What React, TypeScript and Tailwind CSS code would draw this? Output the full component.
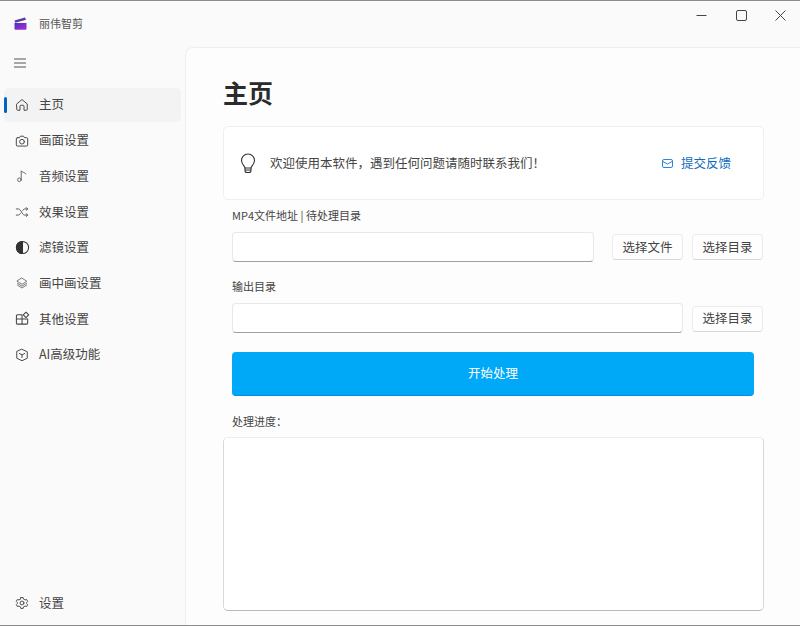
import { ReactNode } from "react";

const font = { fontFamily: '"Noto Sans CJK SC", "Noto Sans", sans-serif' };

function Ico({ children, size = 14, className = "text-[#444]" }: { children: ReactNode; size?: number; className?: string }) {
  return (
    <svg width={size} height={size} viewBox="0 0 16 16" fill="none" stroke="currentColor" strokeWidth={1.1} strokeLinecap="round" strokeLinejoin="round" className={className}>
      {children}
    </svg>
  );
}

const HomeIcon = () => (
  <Ico>
    <path d="M2 6.800 8 1.800l6 5V13a1 1 0 0 1-1 1H10.300V9.500a1.200 1.200 0 0 0-1.200-1.200H6.900a1.200 1.200 0 0 0-1.200 1.200V14H3a1 1 0 0 1-1-1z" />
  </Ico>
);
const CameraIcon = () => (
  <Ico>
    <path d="M2.800 4.200h2.400l1-1.700h3.600l1 1.700h2.400a1.300 1.300 0 0 1 1.300 1.300v7a1.300 1.300 0 0 1-1.300 1.300H2.800a1.300 1.300 0 0 1-1.300-1.300v-7a1.300 1.300 0 0 1 1.300-1.300z" />
    <circle cx="8" cy="8.800" r="2.700" />
  </Ico>
);
const MusicIcon = () => (
  <Ico className="text-[#666]">
    <circle cx="5" cy="12.300" r="2.100" />
    <path d="M7.100 12.300V2c.6 1.900 3.900 1.500 5.400 3.700" />
  </Ico>
);
const ShuffleIcon = () => (
  <Ico className="text-[#555]">
    <path d="M1.500 4.500h2.300c2.800 0 4.600 7 7 7h3.700M1.500 11.500h2.300c1 0 1.900-1 2.500-2M9 6.200c.5-1 1-1.700 1.800-1.700h3.700M12.900 2.900l1.600 1.600-1.600 1.600M12.900 9.900l1.600 1.600-1.600 1.600" />
  </Ico>
);
const ContrastIcon = () => (
  <Ico size={15} className="text-[#333]">
    <circle cx="8" cy="8" r="6.500" />
    <path d="M8 1.500a6.500 6.500 0 0 0 0 13z" fill="currentColor" />
  </Ico>
);
const LayersIcon = () => (
  <Ico className="text-[#777]">
    <path d="M8 2.500 13.500 6 8 9.500 2.500 6z" />
    <path d="M2.700 8.300 8 11.600l5.300-3.300M2.700 10.300 8 13.700l5.300-3.400" />
  </Ico>
);
const AppsIcon = () => (
  <Ico size={15}>
    <path d="M1.500 5a1 1 0 0 1 1-1h5v4.500h-6.000zM1.500 8.500h6V14h-5a1 1 0 0 1-1-1zM7.500 8.500h6V13a1 1 0 0 1-1 1h-5z" />
    <path d="m11.700 1.300 2.900 2.900-2.900 2.900-2.900-2.900z" />
  </Ico>
);
const CubeIcon = () => (
  <Ico>
    <path d="M8 1.500 14 4.300v7.400L8 14.500 2 11.700V4.300z" />
    <path d="M5 6.200 8 7.900l3-1.700M8 7.900v3" />
  </Ico>
);
const GearIcon = () => (
  <Ico>
    <path d="m6.700 1.800 2.600 0 .5 1.800 1.700.9 1.800-.5 1.200 2.200-1.300 1.300v1l1.300 1.300-1.200 2.200-1.800-.5-1.700.9-.5 1.800H6.700l-.5-1.800-1.700-.9-1.800.5-1.200-2.200L2.800 8.500v-1L1.500 6.200l1.200-2.200 1.800.5 1.700-.9z" />
    <circle cx="8" cy="8" r="2.200" />
  </Ico>
);

const navItems = [
  { label: "主页", icon: <HomeIcon />, active: true },
  { label: "画面设置", icon: <CameraIcon /> },
  { label: "音频设置", icon: <MusicIcon /> },
  { label: "效果设置", icon: <ShuffleIcon /> },
  { label: "滤镜设置", icon: <ContrastIcon /> },
  { label: "画中画设置", icon: <LayersIcon /> },
  { label: "其他设置", icon: <AppsIcon /> },
  { label: "AI高级功能", icon: <CubeIcon /> },
];

function NavRow({ label, icon, active }: { label: string; icon: ReactNode; active?: boolean }) {
  return (
    <div className={`relative h-[33.7px] mx-1 mt-0.5 flex items-center rounded-[5px] ${active ? "bg-[#f3f3f3]" : ""}`}>
      {active && <div className="absolute left-0 top-[9px] h-4 w-[3px] rounded-full bg-[#0067c0]" />}
      <div className="w-[35px] flex justify-center pl-[1px]">{icon}</div>
      <span className="text-[12.5px] text-[#444]">{label}</span>
    </div>
  );
}

function SelectButton({ children }: { children: ReactNode }) {
  return (
    <button className="w-[71px] h-[26px] bg-[#fefefe] border border-[#ececec] border-b-[#d8d8d8] rounded-[4px] text-[12.5px] text-[#444]">
      {children}
    </button>
  );
}

function TextBox({ className }: { className: string }) {
  return <div className={`h-[30px] bg-white border border-[#e8e8e8] border-b-[#a0a0a0] rounded-[4px] ${className}`} />;
}

export default function App() {
  return (
    <div className="w-[800px] h-[626px] flex flex-col bg-[#fafafa] overflow-hidden" style={font}>
      <div className="h-px bg-[#8c8c8c]" />
      <div className="flex flex-1 min-h-0">
        {/* Sidebar */}
        <aside className="w-[185px] flex flex-col shrink-0">
          <div className="h-[44px] flex items-center pl-[14px] pt-px gap-[14px]">
            <svg width="13" height="13" viewBox="0 0 13 13">
              <defs>
                <linearGradient id="clap" x1="0" y1="0" x2="1" y2="1">
                  <stop offset="0" stopColor="#4b2fd0" />
                  <stop offset="1" stopColor="#b02fc8" />
                </linearGradient>
              </defs>
              <path d="M0.500 3.600 11 0.500l1 2.200L1.200 5.700z" fill="#5a3a9a" />
              <path d="M0.500 6h12v5.800a1 1 0 0 1-1 1h-10a1 1 0 0 1-1-1z" fill="url(#clap)" />
            </svg>
            <span className="text-[11px] text-[#555] ml-[-2px]">丽伟智剪</span>
          </div>
          <div className="h-[36px] flex items-center pl-[14px] mb-[5px]">
            <svg width="12" height="10" viewBox="0 0 12 10" stroke="#555" strokeWidth="1">
              <path d="M0 1h12M0 5h12M0 9h12" />
            </svg>
          </div>
          <nav className="flex flex-col">
            {navItems.map((item) => (
              <NavRow key={item.label} {...item} />
            ))}
          </nav>
          <div className="mt-auto mb-[5px]">
            <NavRow label="设置" icon={<GearIcon />} />
          </div>
        </aside>

        {/* Right side */}
        <div className="flex-1 flex flex-col min-w-0">
          <div className="h-[46px] flex items-start justify-end text-[#444]">
            <div className="w-[39px] h-[29px] flex items-center justify-center pr-[2px]">
              <svg width="11" height="11" viewBox="0 0 11 11" stroke="#444"><path d="M0.500 5.500h10" /></svg>
            </div>
            <div className="w-[39px] h-[29px] flex items-center justify-center">
              <svg width="11" height="11" viewBox="0 0 11 11" fill="none" stroke="#444"><rect x="0.500" y="0.500" width="10" height="10" rx="1.500" /></svg>
            </div>
            <div className="w-[39px] h-[29px] flex items-center justify-center">
              <svg width="11" height="11" viewBox="0 0 11 11" stroke="#444"><path d="M0.500 0.500l10 10M10.500 0.500l-10 10" /></svg>
            </div>
          </div>
          <main className="flex-1 min-h-0 bg-[#fdfdfd] border-l border-t border-[#eeeeee] rounded-tl-[8px] pl-[37px] pr-[36px] flex flex-col">
            <h1 className="text-[25px] leading-[36px] font-bold text-[#2b2b2b] mt-[26px]">主页</h1>
            <div className="mt-[16px] h-[74px] bg-white border border-[#efefef] rounded-[5px] flex items-center pl-[15px] pr-[32px]">
              <svg width="18" height="21" viewBox="0 0 18 21" fill="none" stroke="#333" strokeWidth="1.100" strokeLinecap="round" strokeLinejoin="round">
                <path d="M6 15c0-2-3.500-3.500-3.500-7.500a6.500 6.500 0 0 1 13 0C15.500 11.500 12 13 12 15z" />
                <path d="M6 15v2.500a2 2 0 0 0 2 2h2a2 2 0 0 0 2-2V15M6.500 17h5" />
              </svg>
              <span className="ml-[13px] text-[12.5px] text-[#444]">欢迎使用本软件，遇到任何问题请随时联系我们！</span>
              <div className="ml-auto flex items-center gap-[8px] text-[#0f6cbd]">
                <svg width="11" height="9" viewBox="0 0 11 9" fill="none" stroke="#2f86d6">
                  <rect x="0.500" y="0.500" width="10" height="8" rx="1.500" />
                  <path d="M0.800 2.500 5.500 5l4.700-2.500" />
                </svg>
                <span className="text-[12.5px]">提交反馈</span>
              </div>
            </div>
            <label className="mt-[7px] ml-[9px] text-[11px] leading-[16px] text-[#444]">MP4文件地址 | 待处理目录</label>
            <div className="mt-[9px] ml-[9px] flex items-center">
              <TextBox className="w-[362px]" />
              <div className="ml-[18px] flex gap-[9px]">
                <SelectButton>选择文件</SelectButton>
                <SelectButton>选择目录</SelectButton>
              </div>
            </div>
            <label className="mt-[16px] ml-[9px] text-[11px] leading-[16px] text-[#444]">输出目录</label>
            <div className="mt-[9px] ml-[9px] flex items-center">
              <TextBox className="w-[451px]" />
              <div className="ml-[9px]">
                <SelectButton>选择目录</SelectButton>
              </div>
            </div>
            <button className="mt-[19px] ml-[9px] w-[522px] h-[44px] bg-[#00a8f8] border-b border-[#0090dc] rounded-[4px] text-white text-[12.5px]">
              开始处理
            </button>
            <label className="mt-[17px] ml-[9px] text-[11px] leading-[16px] text-[#444]">处理进度：</label>
            <div className="mt-[8px] h-[174px] bg-white border border-[#ececec] border-b-[#b8b8b8] border-r-[#d8d8d8] border-l-[#d8d8d8] rounded-[5px]" />
          </main>
        </div>
      </div>
      <div className="h-px bg-[#8c8c8c]" />
    </div>
  );
}
